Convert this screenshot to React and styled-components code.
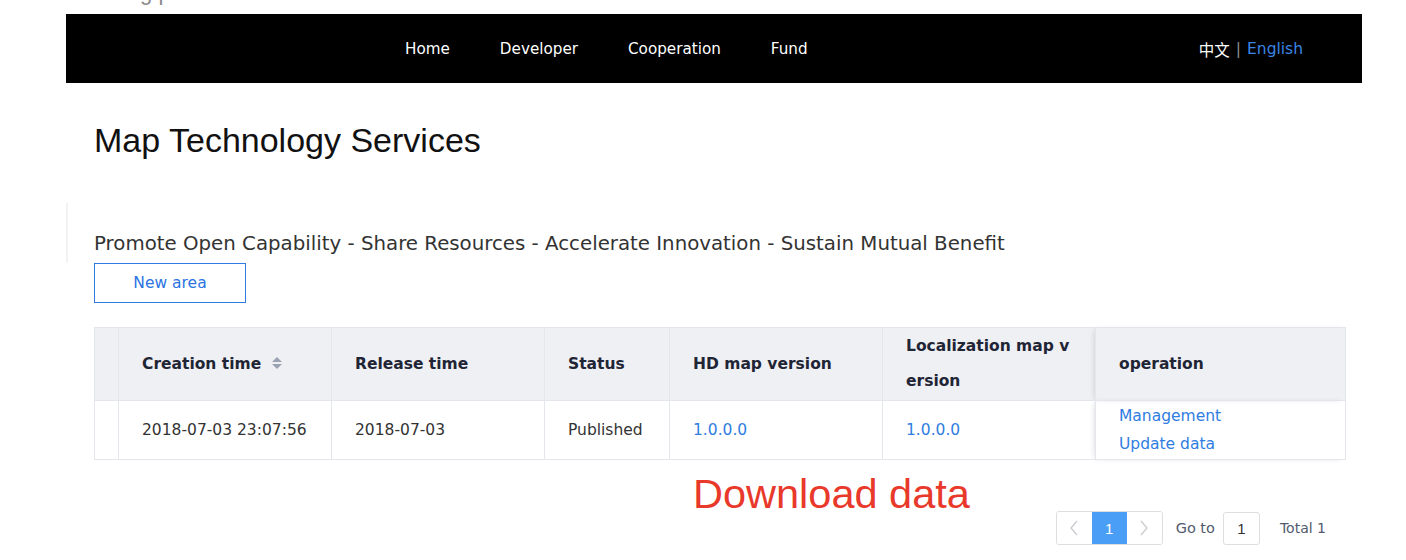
import styled, { createGlobalStyle } from 'styled-components';

const GlobalStyle = createGlobalStyle`
  body {
    margin: 0;
    background: #fff;
    font-family: "DejaVu Sans", sans-serif;
  }
`;

const navItems = ['Home', 'Developer', 'Cooperation', 'Fund'];

const columns = [
  { key: 'blank', title: '', width: 24 },
  { key: 'created', title: 'Creation time', width: 213, sortable: true },
  { key: 'released', title: 'Release time', width: 213 },
  { key: 'status', title: 'Status', width: 125 },
  { key: 'hd', title: 'HD map version', width: 213 },
  { key: 'loc', title: 'Localization map version', width: 213 },
  { key: 'op', title: 'operation', width: 250, fixed: true },
];

const rows = [
  {
    id: 1,
    created: '2018-07-03 23:07:56',
    released: '2018-07-03',
    status: 'Published',
    hd: '1.0.0.0',
    loc: '1.0.0.0',
  },
];

function SortIcon() {
  return (
    <SortSvg width="12" height="14" viewBox="0 0 12 14">
      <path d="M6 1 L11 6 L1 6 Z" fill="#9ba3b2" />
      <path d="M6 13 L11 8 L1 8 Z" fill="#9ba3b2" />
    </SortSvg>
  );
}

function Chevron({ dir }) {
  return (
    <svg width="10" height="16" viewBox="0 0 10 16">
      <path
        d={dir === 'left' ? 'M8 1 L2 8 L8 15' : 'M2 1 L8 8 L2 15'}
        fill="none"
        stroke="#c5c8ce"
        strokeWidth="1.2"
      />
    </svg>
  );
}

export default function App() {
  return (
    <Page>
      <GlobalStyle />
      <Clipped>
        <ClippedText>Working process</ClippedText>
      </Clipped>
      <NavBar>
        <NavList>
          {navItems.map((item) => (
            <NavItem key={item}>{item}</NavItem>
          ))}
        </NavList>
        <Lang>
          <span>中文</span>
          <LangSep>|</LangSep>
          <LangActive>English</LangActive>
        </Lang>
      </NavBar>

      <Content>
        <Title>Map Technology Services</Title>
        <Section>
          <Subtitle>
            Promote Open Capability - Share Resources - Accelerate Innovation - Sustain Mutual Benefit
          </Subtitle>
        </Section>
        <OutlineButton>New area</OutlineButton>

        <Table>
          <colgroup>
            {columns.map((c) => (
              <col key={c.key} style={{ width: c.width }} />
            ))}
          </colgroup>
          <thead>
            <tr>
              {columns.map((c) => (
                <Th key={c.key} $fixed={c.fixed} $blank={c.key === 'blank'}>
                  {c.title}
                  {c.sortable && <SortIcon />}
                </Th>
              ))}
            </tr>
          </thead>
          <tbody>
            {rows.map((r) => (
              <tr key={r.id}>
                <Td $blank />
                <Td>{r.created}</Td>
                <Td>{r.released}</Td>
                <Td>{r.status}</Td>
                <Td>
                  <Link>{r.hd}</Link>
                </Td>
                <Td>
                  <Link>{r.loc}</Link>
                </Td>
                <Td $fixed>
                  <OpLinks>
                    <Link>Management</Link>
                    <Link>Update data</Link>
                  </OpLinks>
                </Td>
              </tr>
            ))}
          </tbody>
        </Table>

        <Footer>
          <Annotation>Download data</Annotation>
          <Pager>
            <PagerGroup>
              <PageBtn>
                <Chevron dir="left" />
              </PageBtn>
              <PageBtn $active>1</PageBtn>
              <PageBtn>
                <Chevron dir="right" />
              </PageBtn>
            </PagerGroup>
            <PagerLabel>Go to</PagerLabel>
            <JumpInput defaultValue="1" />
            <Total>Total 1</Total>
          </Pager>
        </Footer>
      </Content>
    </Page>
  );
}

const Page = styled.div`
  width: 1296px;
  margin-left: 66px;
`;

const Clipped = styled.div`
  height: 14px;
  overflow: hidden;
`;

const ClippedText = styled.div`
  font-family: "Liberation Sans", sans-serif;
  font-size: 22px;
  line-height: 25px;
  color: #8a8a8a;
  margin-top: -20px;
  padding-left: 6px;
`;

const NavBar = styled.header`
  height: 69px;
  background: #000;
  display: flex;
  align-items: center;
  justify-content: space-between;
  padding: 0 59px 0 339px;
`;

const NavList = styled.nav`
  display: flex;
  gap: 50px;
`;

const NavItem = styled.a`
  color: #fff;
  font-size: 15.2px;
  cursor: pointer;
`;

const Lang = styled.div`
  display: flex;
  align-items: center;
  gap: 6px;
  color: #fff;
  font-size: 15.5px;
  font-family: "DejaVu Sans", "Noto Sans CJK SC", sans-serif;
`;

const LangSep = styled.span`
  color: #8c8c8c;
`;

const LangActive = styled.span`
  color: #3a86e6;
`;

const Content = styled.main`
  padding: 38px 17px 0 28px;
`;

const Title = styled.h1`
  margin: 0;
  font-family: "Liberation Sans", sans-serif;
  font-weight: 400;
  font-size: 34px;
  line-height: 39px;
  color: #111;
`;

const Section = styled.section`
  margin: 43px 0 0 -28px;
  padding: 26px 0 5px 26px;
  border-left: 2px solid #f2f2f2;
`;

const Subtitle = styled.p`
  margin: 0;
  font-size: 19.8px;
  line-height: 29px;
  color: #333;
  white-space: nowrap;
`;

const OutlineButton = styled.button`
  display: block;
  width: 152px;
  height: 40px;
  background: #fff;
  border: 1px solid #2f7ae5;
  color: #2b74e2;
  font-family: "DejaVu Sans", sans-serif;
  font-size: 15.5px;
  cursor: pointer;
`;

const Table = styled.table`
  margin-top: 24px;
  width: 1251px;
  table-layout: fixed;
  border-collapse: collapse;
  border: 1px solid #e3e6eb;
`;

const Th = styled.th`
  height: 72px;
  padding: 0 ${(p) => (p.$blank ? 0 : 23)}px;
  background: #eff0f4;
  border-right: 1px solid #e3e6eb;
  border-bottom: 1px solid #e3e6eb;
  text-align: left;
  font-size: 15.5px;
  font-weight: 700;
  line-height: 35px;
  color: #1f2535;
  word-break: break-all;
  box-shadow: ${(p) => (p.$fixed ? '-3px 0 6px -2px rgba(0,0,0,0.16)' : 'none')};
`;

const SortSvg = styled.svg`
  margin-left: 10px;
  vertical-align: -1px;
`;

const Td = styled.td`
  height: 58px;
  padding: 0 ${(p) => (p.$blank ? 0 : 23)}px;
  border-right: 1px solid #e3e6eb;
  font-size: 15.5px;
  color: #333;
  box-shadow: ${(p) => (p.$fixed ? '-3px 0 6px -2px rgba(0,0,0,0.16)' : 'none')};
`;

const Link = styled.a`
  color: #2f7de1;
  cursor: pointer;
`;

const OpLinks = styled.div`
  display: flex;
  flex-direction: column;
  line-height: 28px;
`;

const Footer = styled.div`
  display: flex;
  justify-content: space-between;
  align-items: flex-start;
`;

const Annotation = styled.div`
  margin: 11px 0 0 599px;
  font-family: "Liberation Sans", sans-serif;
  font-size: 41.5px;
  line-height: 46px;
  color: #e8392b;
`;

const Pager = styled.div`
  display: flex;
  align-items: center;
  margin: 51px 19px 0 0;
`;

const PagerGroup = styled.div`
  display: flex;
  border: 1px solid #dcdee2;
  border-radius: 3px;
  overflow: hidden;
`;

const PageBtn = styled.div`
  width: 35px;
  height: 32px;
  display: flex;
  align-items: center;
  justify-content: center;
  background: ${(p) => (p.$active ? '#4b9ef5' : '#fff')};
  color: ${(p) => (p.$active ? '#fff' : '#515a6e')};
  font-family: "Liberation Sans", sans-serif;
  font-size: 15px;
`;

const PagerLabel = styled.span`
  margin: 0 8px 0 13px;
  font-size: 14.5px;
  color: #515a6e;
`;

const JumpInput = styled.input`
  box-sizing: border-box;
  width: 37px;
  height: 33px;
  border: 1px solid #dcdee2;
  border-radius: 3px;
  text-align: center;
  font-family: "Liberation Sans", sans-serif;
  font-size: 15px;
  color: #333;
  padding: 0;
`;

const Total = styled.span`
  margin-left: 20px;
  font-size: 14px;
  color: #515a6e;
`;
